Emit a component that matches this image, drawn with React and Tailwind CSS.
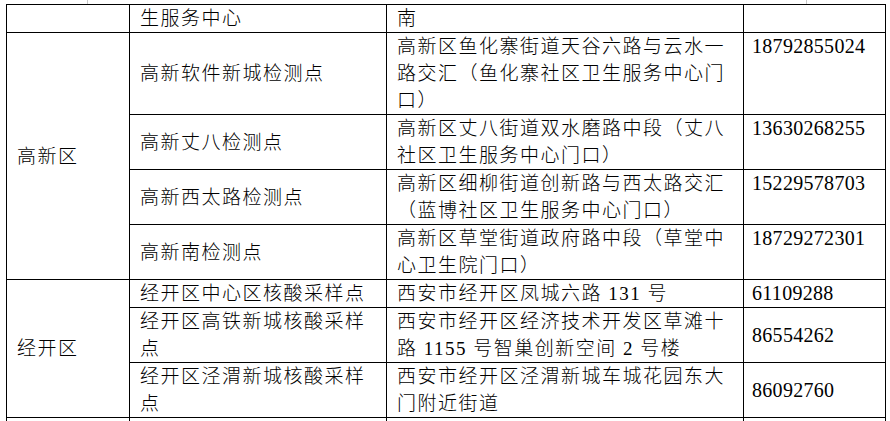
import React from "react";

const cell = "bg-white leading-[27px] pl-[10px] pr-[6px]";

function Cell({ children, className = "" }) {
  return <div className={`${cell} ${className}`}>{children}</div>;
}

function Phone({ children, center = false }) {
  return (
    <div
      className={`bg-white leading-[27px] pl-[8px] text-[20px] tracking-[0.3px] font-normal ${
        center ? "flex items-center" : ""
      }`}
    >
      {children}
    </div>
  );
}

export default function App() {
  return (
    <div className="w-[890px] h-[421px] overflow-hidden bg-white text-black text-[19px] tracking-[1.5px] font-light font-['Liberation_Serif','Noto_Sans_CJK_SC',serif] [text-spacing-trim:space-all]">
      <div className="flex h-[4px]">
        <div className="ml-[87px] w-px h-[4px] bg-[#c8c8c8]" />
        <div className="ml-[718px] w-px h-[4px] bg-[#c8c8c8]" />
      </div>
      <div className="ml-[6px] w-fit grid grid-cols-[122px_256px_356px_141px] gap-px p-px bg-black">
        <Cell />
        <Cell>生服务中心</Cell>
        <Cell>南</Cell>
        <Cell />

        <Cell className="row-span-4 flex items-center pl-[9px]">高新区</Cell>
        <Cell className="flex items-center">高新软件新城检测点</Cell>
        <Cell>高新区鱼化寨街道天谷六路与云水一路交汇（鱼化寨社区卫生服务中心门口）</Cell>
        <Phone>18792855024</Phone>

        <Cell className="flex items-center">高新丈八检测点</Cell>
        <Cell>高新区丈八街道双水磨路中段（丈八社区卫生服务中心门口）</Cell>
        <Phone>13630268255</Phone>

        <Cell className="flex items-center">高新西太路检测点</Cell>
        <Cell>高新区细柳街道创新路与西太路交汇（蓝博社区卫生服务中心门口）</Cell>
        <Phone>15229578703</Phone>

        <Cell className="flex items-center">高新南检测点</Cell>
        <Cell>高新区草堂街道政府路中段（草堂中心卫生院门口）</Cell>
        <Phone>18729272301</Phone>

        <Cell className="row-span-3 flex items-center pl-[9px]">经开区</Cell>
        <Cell>经开区中心区核酸采样点</Cell>
        <Cell>西安市经开区凤城六路 131 号</Cell>
        <Phone>61109288</Phone>

        <Cell>经开区高铁新城核酸采样点</Cell>
        <Cell>西安市经开区经济技术开发区草滩十路 1155 号智巢创新空间 2 号楼</Cell>
        <Phone center>86554262</Phone>

        <Cell>经开区泾渭新城核酸采样点</Cell>
        <Cell>西安市经开区泾渭新城车城花园东大门附近街道</Cell>
        <Phone center>86092760</Phone>

        <Cell>&nbsp;</Cell>
        <Cell>&nbsp;</Cell>
        <Cell>&nbsp;</Cell>
        <Cell>&nbsp;</Cell>
      </div>
    </div>
  );
}
